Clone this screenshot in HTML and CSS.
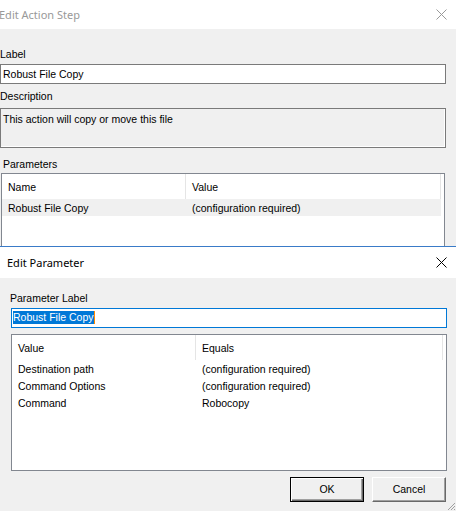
FILE: index.html
```html
<!DOCTYPE html>
<html lang="en">
<head>
    <meta charset="UTF-8">
    <title>Edit Parameter</title>
    <link rel="stylesheet" href="styles.css">
</head>
<body>
    <!-- background dialog, inactive -->
    <div class="window step-window">
        <div class="titlebar">
            <span class="title">Edit Action Step</span>
            <svg class="close" width="11" height="11" viewBox="0 0 11 11">
                <path d="M0.5 0.5 L10.5 10.5 M10.5 0.5 L0.5 10.5" />
            </svg>
        </div>
        <div class="step-body">
            <div class="field-label">Label</div>
            <div class="textbox">Robust File Copy</div>
            <div class="field-label desc-label">Description</div>
            <div class="textarea">This action will copy or move this file</div>
            <div class="field-label params-label">Parameters</div>
            <div class="listview">
                <div class="lv-head">
                    <span class="col-1">Name</span>
                    <span class="col-2">Value</span>
                </div>
                <div class="lv-row selected">
                    <span class="col-1">Robust File Copy</span>
                    <span class="col-2">(configuration required)</span>
                </div>
            </div>
        </div>
    </div>

    <!-- front dialog -->
    <div class="window param-window">
        <div class="titlebar">
            <span class="title">Edit Parameter</span>
            <svg class="close" width="11" height="11" viewBox="0 0 11 11">
                <path d="M0.5 0.5 L10.5 10.5 M10.5 0.5 L0.5 10.5" />
            </svg>
        </div>
        <div class="param-body">
            <div class="field-label">Parameter Label</div>
            <div class="textbox focused"><span class="selection">Robust File Copy</span><span class="caret"></span></div>
            <div class="listview tall">
                <div class="lv-head">
                    <span class="col-1">Value</span>
                    <span class="col-2">Equals</span>
                </div>
                <div class="lv-row">
                    <span class="col-1">Destination path</span>
                    <span class="col-2">(configuration required)</span>
                </div>
                <div class="lv-row">
                    <span class="col-1">Command Options</span>
                    <span class="col-2">(configuration required)</span>
                </div>
                <div class="lv-row">
                    <span class="col-1">Command</span>
                    <span class="col-2">Robocopy</span>
                </div>
            </div>
            <div class="buttons">
                <button class="btn default">OK</button>
                <button class="btn">Cancel</button>
            </div>
        </div>
        <svg class="grip" width="10" height="10" viewBox="0 0 10 10">
            <path d="M9 2 L2 9 M9 5 L5 9 M9 8 L8 9" />
        </svg>
    </div>
</body>
</html>
```

FILE: styles.css
```css
* {
    box-sizing: border-box;
}

body {
    margin: 0;
    width: 456px;
    height: 511px;
    overflow: hidden;
    background: #f0f0f0;
    font-family: "Liberation Sans", Arial, sans-serif;
    font-size: 10.5px;
    line-height: 13px;
    color: #000;
}

.window {
    background: #f0f0f0;
}

.titlebar {
    display: flex;
    align-items: center;
    justify-content: space-between;
    background: #fff;
    padding-right: 9px;
    font-family: "Noto Sans", "Open Sans", sans-serif;
    font-size: 11px;
}

.close path {
    stroke-width: 1;
    fill: none;
}

/* inactive dialog behind */
.step-window {
    height: 246px;
    overflow: hidden;
}

.step-window .titlebar {
    height: 29px;
    color: #999;
}

.step-window .title {
    margin-left: -1px;
}

.step-window .close path {
    stroke: #999;
}

.step-body {
    padding: 19px 10px 0 0;
}

.field-label {
    margin-bottom: 3px;
}

.desc-label {
    margin-top: 6px;
    margin-bottom: 5px;
}

.params-label {
    margin-top: 10px;
    margin-bottom: 2px;
    padding-left: 3px;
}

.textbox {
    height: 20px;
    background: #fff;
    border: 1px solid #7a7a7a;
    padding: 3px 2px 0;
    white-space: nowrap;
}

.textarea {
    height: 40px;
    border: 1px solid #7a7a7a;
    box-shadow: inset -1px -1px 0 #fff;
    padding: 4px 2px 0;
}

.listview {
    background: #fff;
    border: 1px solid #828790;
    padding-right: 3px;
}

.step-body .listview {
    margin-left: 1px;
    margin-right: 1px;
    height: 90px;
}

.lv-head,
.lv-row {
    display: flex;
    white-space: nowrap;
}

.lv-head {
    height: 25px;
    padding-top: 7px;
    border-right: 1px solid #e5e5e5;
}

.lv-row {
    height: 17px;
    padding-top: 3px;
}

.col-1 {
    width: 184px;
    padding-left: 6px;
}

.lv-head .col-1 {
    border-right: 1px solid #e5e5e5;
    margin-top: -7px;
    padding-top: 7px;
}

.col-2 {
    padding-left: 6px;
}

.lv-row.selected {
    background: #f0f0f0;
}

/* active dialog in front */
.param-window {
    position: relative;
    height: 265px;
    border-top: 1px solid #3a7bc8;
}

.param-window .titlebar {
    height: 31px;
    padding-left: 7px;
}

.param-window .close path {
    stroke: #000;
}

.param-body {
    padding: 14px 9px 0 11px;
}

.param-body .field-label {
    margin-left: -1px;
}

.textbox.focused {
    border-color: #0078d7;
    padding: 2px 1px 0;
    display: flex;
    align-items: flex-start;
}

.selection {
    background: #0078d7;
    color: #fff;
    height: 13px;
}

.caret {
    width: 1px;
    height: 13px;
    background: #ff8a00;
}

.listview.tall {
    margin-top: 6px;
    height: 137px;
}

.buttons {
    display: flex;
    justify-content: flex-end;
    gap: 8px;
    margin-top: 6px;
    padding-right: 1px;
}

.btn {
    width: 74px;
    height: 25px;
    padding: 0;
    font: inherit;
    color: #000;
    background: #f0f0f0;
    border: 1px solid;
    border-color: #fff #696969 #696969 #fff;
    box-shadow: inset -1px -1px 0 #a0a0a0;
}

.btn.default {
    border: 1px solid #000;
    box-shadow: inset 1px 1px 0 #fff, inset -1px -1px 0 #696969, inset -2px -2px 0 #a0a0a0;
}

.grip {
    position: absolute;
    right: 0;
    bottom: 0;
}

.grip path {
    stroke: #a0a0a0;
    stroke-width: 1;
    fill: none;
}
```
